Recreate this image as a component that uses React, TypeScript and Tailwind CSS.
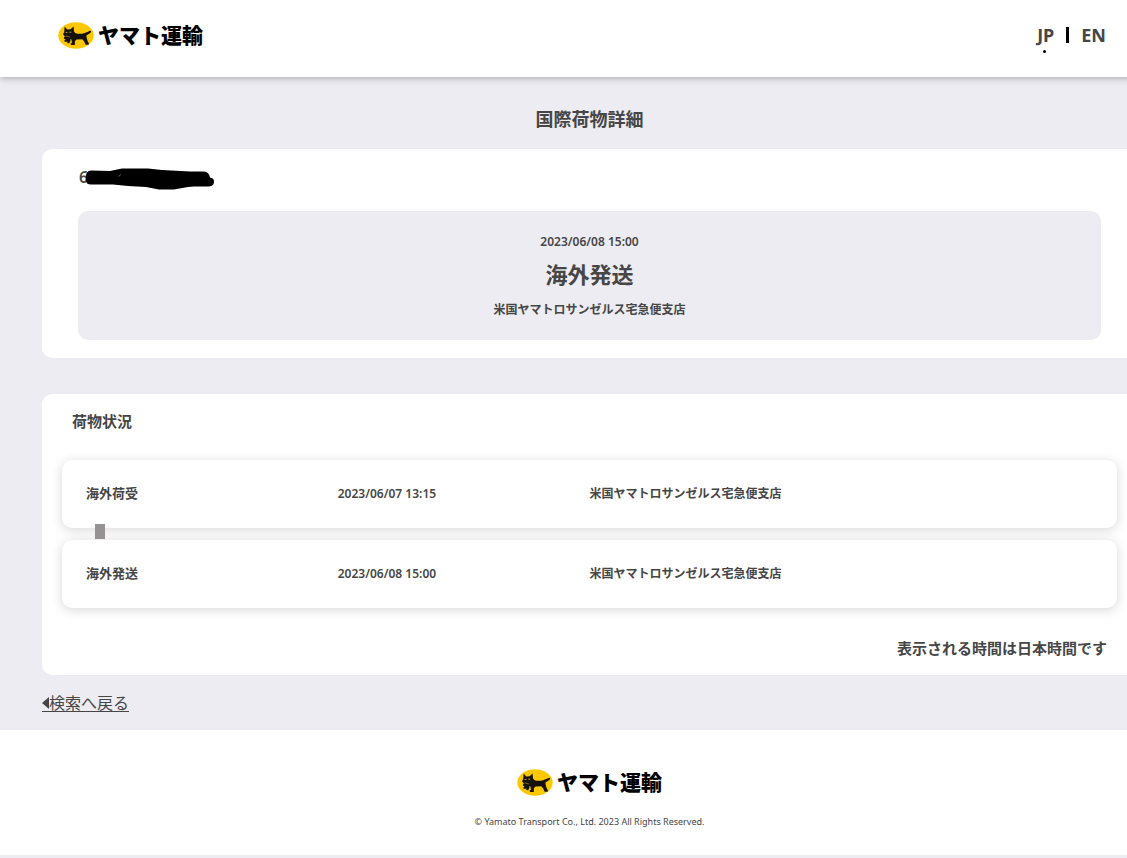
import clsx from "clsx";

interface StatusItem {
    status: string;
    date: string;
    place: string;
}

const history: StatusItem[] = [
    { status: "海外荷受", date: "2023/06/07 13:15", place: "米国ヤマトロサンゼルス宅急便支店" },
    { status: "海外発送", date: "2023/06/08 15:00", place: "米国ヤマトロサンゼルス宅急便支店" },
];

const Logo = () => {
    return (
        <div className="flex items-center gap-1">
            <svg viewBox="0 0 36 27" className="h-[27px] w-9" aria-hidden="true">
                <ellipse cx="18" cy="13.5" rx="17.7" ry="13.2" fill="#fdc800" />
                {/* cat */}
                <path
                    d="M6.6 4.6 L9.2 7.4 L12.6 7.2 L15.6 4.6 L16 9.4 L17.6 11.2 C20 12 23.4 11.8 26.2 11.2 C28.6 10.4 30.4 9.4 32.2 8.8 C33.6 8.8 33.4 10.2 32.2 11 L28.4 13.4 C28.4 15.6 29.4 17.6 29.8 19.6 L30.8 21.2 L30.8 22.8 L27.6 22.8 L26.2 19.4 L24.2 17.2 L18.6 17.4 L17 19 L16.8 23 L13 23 L12.6 21.6 L14 20.8 L13.4 17.4 L11.6 16.4 L8.4 15.4 L6 13.4 L5 12 L6.2 10.2 Z"
                    fill="#14110a"
                />
                {/* kitten */}
                <path d="M6.4 14.4 L9.4 15 L12.6 16 L12.4 19 L11.2 21.2 L9.2 21 L9.4 19.4 L7 20 L6.2 18.8 L7.6 17.6 L5.8 16.4 Z" fill="#14110a" />
                <path d="M7.6 10.4 h1.8 M11.4 10.2 h1.8" stroke="#fdc800" strokeWidth="0.8" />
                <path d="M8 13.9 L11.8 15" stroke="#fdc800" strokeWidth="0.5" />
            </svg>
            <span className="text-[21px] leading-[30px] font-black text-black">ヤマト運輸</span>
        </div>
    );
}

// black marker drawn over the tracking number
const Marker = () => {
    return (
        <svg viewBox="0 0 130 22" className="mt-1 h-[22px] w-[130px]" aria-hidden="true">
            <path
                d="M5 2.5 Q0 3 0 8 V12 Q0 16.5 5 16.5 H27 L42 18 L60 19 L73 21.5 H88 L102 19 L108 18.5 H123 Q128 18 128 13.5 Q128 10 124 9.5 Q123 4 118 3.5 H104 L76 2 L62 .5 H36 L24 3 Z"
                fill="#000"
            />
            <path d="M32.5 8.5 L35 6.5" stroke="#777" strokeWidth="0.8" />
        </svg>
    );
}

const StatusRow = ({ item, last }: { item: StatusItem; last: boolean }) => {
    return (
        <li>
            <div className="flex h-[68px] items-center rounded-[10px] bg-white px-6 text-xs font-semibold shadow-[0_2px_12px_rgba(0,0,0,0.16)]">
                <span className="w-1/4 text-[13px]">{item.status}</span>
                <span className="w-1/4">{item.date}</span>
                <span className="w-1/2">{item.place}</span>
            </div>
            <div className={clsx("relative h-3", last && "hidden")}>
                <span className="absolute -top-1 left-[33px] h-[15px] w-2.5 bg-[#969192]" />
            </div>
        </li>
    );
}

export default function App() {
    return (
        <div className="min-h-screen overflow-x-hidden bg-[#edecf2] font-['Noto_Sans','Noto_Sans_CJK_JP',sans-serif] text-[#464646]">
            <div className="-mr-[52px]">
                <header className="relative flex h-[77px] items-start justify-between bg-white pt-5 pr-[73px] pl-[58px] shadow-[0_1px_7px_rgba(0,0,0,0.3)]">
                    <Logo />
                    <nav className="flex items-start text-lg leading-[30px] font-bold">
                        <a href="#jp" className="flex flex-col items-start">
                            JP
                            <span className="ml-1.5 size-[3px] rounded-full bg-black" />
                        </a>
                        <span className="mx-3 mt-[7px] h-4 w-[3px] bg-black" />
                        <a href="#en">EN</a>
                    </nav>
                </header>

                <main className="px-[42px] pt-7 pb-[18px]">
                    <h1 className="text-center text-lg leading-7 font-bold">国際荷物詳細</h1>

                    <section className="mt-4 rounded-[10px] bg-white px-9 pt-4 pb-[18px]">
                        <div className="flex h-6 items-center pl-px text-base font-semibold">
                            <span>6</span>
                            <span className="-ml-0.5">
                                <Marker />
                            </span>
                        </div>
                        <div className="mt-[22px] flex flex-col items-center rounded-[10px] bg-[#edecf2] pt-[21px] pb-5 font-semibold">
                            <p className="text-xs leading-5">2023/06/08 15:00</p>
                            <p className="mt-1.5 mb-2.5 text-[22px] leading-8 font-bold">海外発送</p>
                            <p className="text-xs leading-5">米国ヤマトロサンゼルス宅急便支店</p>
                        </div>
                    </section>

                    <section className="mt-9 rounded-[10px] bg-white px-5 pt-[15px] pb-[15px]">
                        <h2 className="pl-2.5 text-[15px] leading-6 font-bold">荷物状況</h2>
                        <ul className="mt-[27px]">
                            {history.map((item, index) => (
                                <StatusRow key={item.date} item={item} last={index === history.length - 1} />
                            ))}
                        </ul>
                        <p className="mt-7 pr-2.5 text-right text-[15px] leading-6 font-bold">表示される時間は日本時間です</p>
                    </section>

                    <a href="#search" className="mt-5 flex w-fit items-center border-b border-[#464646] text-base leading-4">
                        <svg viewBox="0 0 7 12" className="h-3 w-[7px]" aria-hidden="true">
                            <path d="M7 0 V12 L0 6 Z" fill="#464646" />
                        </svg>
                        検索へ戻る
                    </a>
                </main>

                <footer className="flex h-[125px] flex-col items-center bg-white pt-[37px]">
                    <Logo />
                    <p className="mt-[17px] text-[9px] leading-4">© Yamato Transport Co., Ltd. 2023 All Rights Reserved.</p>
                </footer>
            </div>
        </div>
    );
}
